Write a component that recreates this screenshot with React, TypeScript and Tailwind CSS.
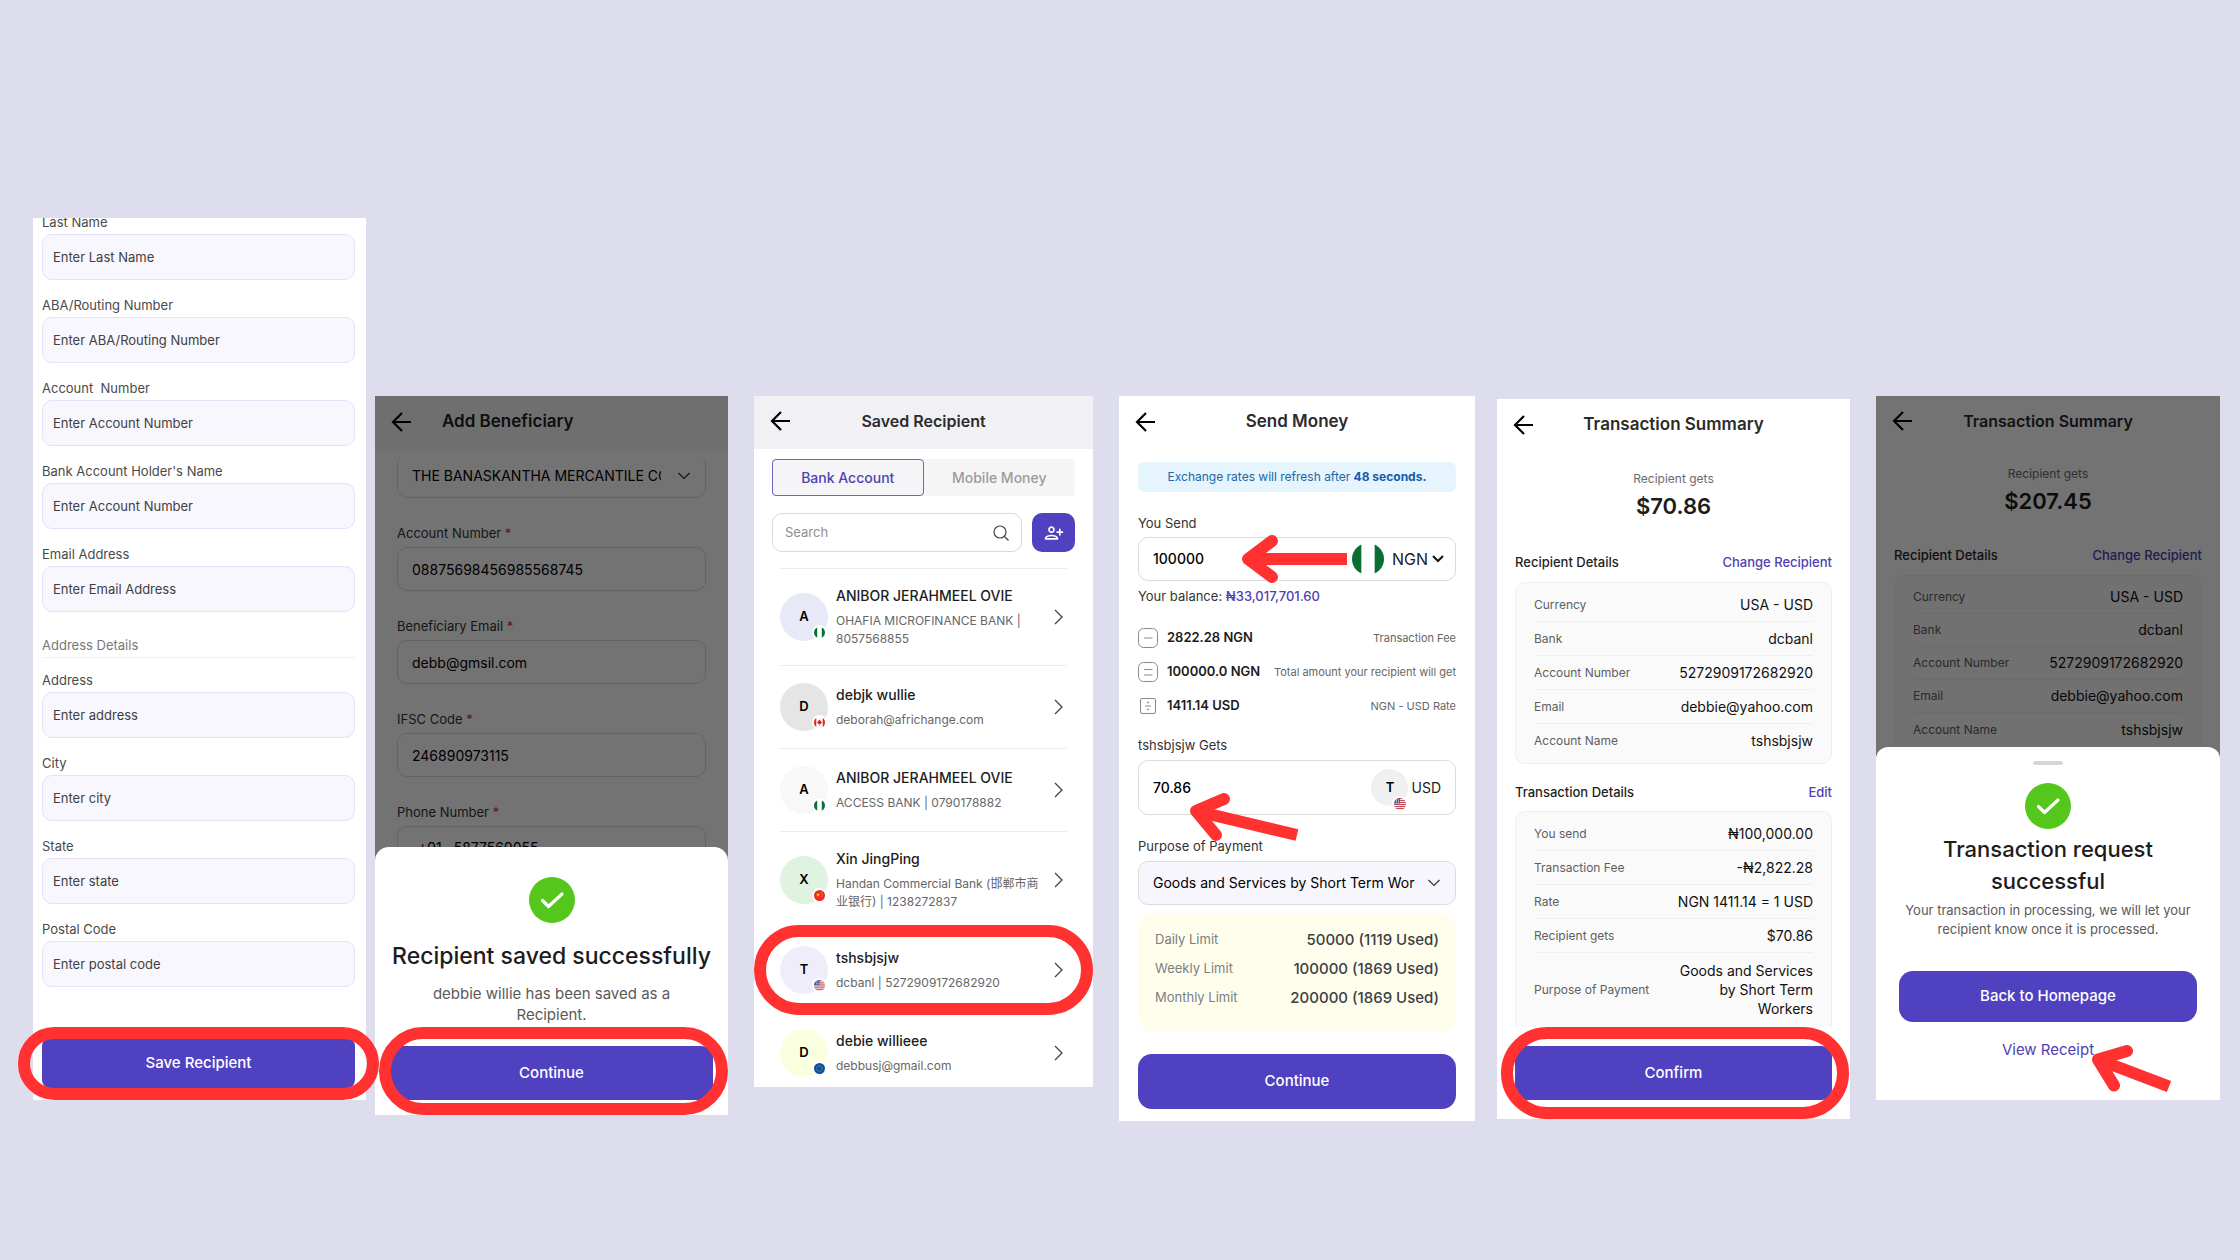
import React, { useId } from "react";

// Address form on the first screen
const accountFields = [
  { label: "Last Name", placeholder: "Enter Last Name" },
  { label: "ABA/Routing Number", placeholder: "Enter ABA/Routing Number" },
  { label: "Account  Number", placeholder: "Enter Account Number" },
  { label: "Bank Account Holder's Name", placeholder: "Enter Account Number" },
  { label: "Email Address", placeholder: "Enter Email Address" },
];

const addressFields = [
  { label: "Address", placeholder: "Enter address" },
  { label: "City", placeholder: "Enter city" },
  { label: "State", placeholder: "Enter state" },
  { label: "Postal Code", placeholder: "Enter postal code" },
];

const beneficiaryFields = [
  { label: "Account Number", value: "08875698456985568745" },
  { label: "Beneficiary Email", value: "debb@gmsil.com" },
  { label: "IFSC Code", value: "246890973115" },
];

type Country = "ng" | "ca" | "cn" | "us" | "eu";

const recipients: {
  name: string;
  detail: string;
  country: Country;
  color: string;
  marked?: boolean;
}[] = [
  {
    name: "ANIBOR JERAHMEEL OVIE",
    detail: "OHAFIA MICROFINANCE BANK | 8057568855",
    country: "ng",
    color: "bg-[#e8e9f6]",
  },
  {
    name: "debjk wullie",
    detail: "deborah@africhange.com",
    country: "ca",
    color: "bg-[#e5e5e5]",
  },
  {
    name: "ANIBOR JERAHMEEL OVIE",
    detail: "ACCESS BANK | 0790178882",
    country: "ng",
    color: "bg-[#f8f8f8]",
  },
  {
    name: "Xin JingPing",
    detail: "Handan Commercial Bank (邯郸市商业银行) | 1238272837",
    country: "cn",
    color: "bg-[#e0f2e0]",
  },
  {
    name: "tshsbjsjw",
    detail: "dcbanl | 5272909172682920",
    country: "us",
    color: "bg-[#efedfa]",
    marked: true,
  },
  {
    name: "debie willieee",
    detail: "debbusj@gmail.com",
    country: "eu",
    color: "bg-[#faffe0]",
  },
];

const rates = [
  { sign: "minus", amount: "2822.28 NGN", note: "Transaction Fee" },
  {
    sign: "equals",
    amount: "100000.0 NGN",
    note: "Total amount your recipient will get",
  },
  { sign: "divide", amount: "1411.14 USD", note: "NGN - USD Rate" },
];

const limits = [
  { label: "Daily Limit", value: "50000 (1119 Used)" },
  { label: "Weekly Limit", value: "100000 (1869 Used)" },
  { label: "Monthly Limit", value: "200000 (1869 Used)" },
];

const recipientDetails = [
  ["Currency", "USA - USD"],
  ["Bank", "dcbanl"],
  ["Account Number", "5272909172682920"],
  ["Email", "debbie@yahoo.com"],
  ["Account Name", "tshsbjsjw"],
];

const transactionDetails = [
  ["You send", "₦100,000.00"],
  ["Transaction Fee", "-₦2,822.28"],
  ["Rate", "NGN 1411.14 = 1 USD"],
  ["Recipient gets", "$70.86"],
];

const BackArrow = () => (
  <svg width="20" height="20" viewBox="0 0 20 20" fill="none" stroke="#000" strokeWidth="2.2">
    <path d="M20 10H2M11 1L2 10l9 9" />
  </svg>
);

const ThinChevron = ({ className }: { className: string }) => (
  <svg
    className={className}
    width="12"
    height="8"
    viewBox="0 0 12 8"
    fill="none"
    stroke="#333"
    strokeWidth="1.2"
  >
    <path d="M.5 1L6 6.500 11.500 1" />
  </svg>
);

const Flag = ({ country, className }: { country: Country; className: string }) => {
  const id = useId();
  return (
    <svg className={className} viewBox="0 0 24 24">
      <clipPath id={id}>
        <circle cx="12" cy="12" r="12" />
      </clipPath>
      <g clipPath={`url(#${id})`}>
        {country === "ng" && (
          <>
            <path fill="#fff" d="M0 0h24v24H0z" />
            <path fill="#0b6e33" d="M0 0h7v24H0zM17 0h7v24h-7z" />
          </>
        )}
        {country === "ca" && (
          <>
            <path fill="#fff" d="M0 0h24v24H0z" />
            <path fill="#d52b1e" d="M0 0h5v24H0zM19 0h5v24h-5z" />
            <path
              fill="#d52b1e"
              d="M12 5l1.500 3 2-.8-.5 3.300 3 .5-3 3.500.3 1.500-2.800-.5V19h-1v-3.500l-2.800.5.3-1.500-3-3.500 3-.5-.5-3.300 2 .8z"
            />
          </>
        )}
        {country === "cn" && (
          <>
            <path fill="#ee2b24" d="M0 0h24v24H0z" />
            <path
              fill="#ffca28"
              d="M9 6l1.200 3.300h3.500l-2.800 2.100 1 3.400L9 12.800l-2.900 2 1-3.400-2.800-2.100h3.500zM15 5h2v2h-2zM17 8.500h2v2h-2zM16 12.500h2v2h-2z"
            />
          </>
        )}
        {country === "us" && (
          <>
            <path fill="#f2e4e6" d="M0 0h24v24H0z" />
            <path
              stroke="#c4515c"
              strokeWidth="2"
              d="M0 1h24M0 5h24M0 9h24M0 13h24M0 17h24M0 21h24"
            />
            <path fill="#3a5a9e" d="M0 0h12v11H0z" />
            <path fill="#fff" d="M4 3h2v2H4zM8 3h2v2H8zM4 7h2v2H4zM8 7h2v2H8z" />
          </>
        )}
        {country === "eu" && (
          <>
            <path fill="#0b4ea2" d="M0 0h24v24H0z" />
            <circle
              cx="12"
              cy="12"
              r="6"
              fill="none"
              stroke="#e8d23a"
              strokeWidth="1.800"
              strokeDasharray="1.800 2.900"
            />
          </>
        )}
      </g>
    </svg>
  );
};

const SignIcon = ({ sign }: { sign: string }) => (
  <svg width="20" height="20" viewBox="0 0 20 20" fill="none" stroke="#8a8a8a" className="shrink-0">
    {sign === "divide" ? (
      <>
        <rect x="2.500" y="2.500" width="15" height="15" rx="1.500" />
        <path d="M7 10h6" />
        <circle cx="10" cy="6.500" r=".6" fill="#8a8a8a" />
        <circle cx="10" cy="13.500" r=".6" fill="#8a8a8a" />
      </>
    ) : (
      <>
        <rect x=".5" y=".5" width="19" height="19" rx="5" />
        {sign === "minus" ? <path d="M6 10h8.500" /> : <path d="M6 7.500h8.500M6 13h8.500" />}
      </>
    )}
  </svg>
);

const SuccessIcon = () => (
  <svg className="mx-auto size-[46px]" viewBox="0 0 46 46" fill="none">
    <circle cx="23" cy="23" r="23" fill="#55c61b" />
    <path
      d="M13.500 23.500l6 6L33 17"
      stroke="#fff"
      strokeWidth="3.200"
      strokeLinecap="round"
      strokeLinejoin="round"
    />
  </svg>
);

// Red outline that points at the next tap
const Ring = ({ className }: { className: string }) => (
  <span
    className={`pointer-events-none absolute z-10 rounded-full border-[12px] border-[#ff3131] ${className}`}
  />
);

const Pointer = ({
  className,
  width,
  height,
  head,
  shaft,
}: {
  className: string;
  width: number;
  height: number;
  head: string;
  shaft: string;
}) => (
  <svg
    className={`pointer-events-none absolute z-10 max-w-none ${className}`}
    width={width}
    height={height}
    viewBox={`0 0 ${width} ${height}`}
    fill="none"
    stroke="#ff3131"
    strokeWidth="12"
  >
    <path d={shaft} />
    <path d={head} strokeLinecap="round" strokeLinejoin="round" />
  </svg>
);

const ScreenHeader = ({ title, className }: { title: string; className: string }) => (
  <header
    className={`grid grid-cols-[20px_1fr_20px] items-center px-4 font-semibold text-[#2b2b2b] ${className}`}
  >
    <button aria-label="Back">
      <BackArrow />
    </button>
    <h2 className="text-center">{title}</h2>
  </header>
);

const PrimaryButton = ({ children, className }: { children: string; className: string }) => (
  <button className={`block w-full bg-[#4f41c0] text-[15px] font-medium text-white ${className}`}>
    {children}
  </button>
);

const FormField = ({ label, placeholder }: { label: string; placeholder: string }) => {
  const id = useId();
  return (
    <div>
      <label
        htmlFor={id}
        className="block text-[13px] leading-5 whitespace-pre text-[#4a4a4a]"
      >
        {label}
      </label>
      <input
        id={id}
        placeholder={placeholder}
        className="mt-0.5 block h-[46px] w-full rounded-[10px] border border-[#e4e1f8] bg-[#f8f7fd] px-2.5 text-[13px] placeholder:text-[#404040]"
      />
    </div>
  );
};

const DetailRows = ({ rows, rowClass }: { rows: string[][]; rowClass: string }) => (
  <>
    {rows.map(([label, value]) => (
      <div
        key={label}
        className={`flex items-center justify-between border-b border-[#efefef] ${rowClass}`}
      >
        <dt className="text-xs text-[#5f5f5f]">{label}</dt>
        <dd className="text-sm text-[#111]">{value}</dd>
      </div>
    ))}
  </>
);

const SectionHead = ({
  title,
  link,
  className,
}: {
  title: string;
  link: string;
  className: string;
}) => (
  <div className={`flex justify-between text-[13px] leading-5 font-medium ${className}`}>
    <h3 className="text-[#1f1f1f]">{title}</h3>
    <a href="#" className="text-[#4f41b0]">
      {link}
    </a>
  </div>
);

const RecipientForm = () => (
  <section className="min-w-0 flex-[333_1_0%] bg-white">
    <div className="pr-[11px] pb-3 pl-[9px]">
      <div className="overflow-hidden">
        <div className="-mt-1.5 flex flex-col gap-[15px]">
          {accountFields.map((field) => (
            <FormField key={field.label} {...field} />
          ))}
        </div>
      </div>
      <h3 className="mt-[23px] border-b border-[#f0f0f0] pb-0.5 text-[13px] leading-5 text-[#777]">
        Address Details
      </h3>
      <div className="mt-3 flex flex-col gap-[15px]">
        {addressFields.map((field) => (
          <FormField key={field.label} {...field} />
        ))}
      </div>
      <div className="relative mt-[51px]">
        <PrimaryButton className="h-[50px] rounded-lg">Save Recipient</PrimaryButton>
        <Ring className="-inset-x-6 -top-[11px] -bottom-3" />
      </div>
    </div>
  </section>
);

const fieldBox =
  "h-11 w-full rounded-[10px] border border-[#dcdcdc] px-3.5 text-sm text-black";

const AddBeneficiary = () => (
  <section className="relative mt-[178px] ml-[9px] min-w-0 flex-[353_1_0%] bg-white">
    <header className="flex h-[55px] items-center gap-[31px] bg-[#f6f6f8] px-4 pb-1">
      <button aria-label="Back">
        <BackArrow />
      </button>
      <h2 className="text-[17px] font-semibold text-[#1f1f1f]">Add Beneficiary</h2>
    </header>
    <div className="mt-[7px] overflow-hidden px-[22px]">
      <div className="relative -mt-1">
        <select aria-label="Bank" className={`${fieldBox} block appearance-none pr-11`}>
          <option>THE BANASKANTHA MERCANTILE COOPERATIVE BANK</option>
        </select>
        <ThinChevron className="absolute top-[18px] right-4" />
      </div>
      {beneficiaryFields.map(({ label, value }) => (
        <label key={label} className="mt-[25px] block text-[13px] leading-5 text-[#333]">
          {label} <span className="text-[#e5262b]">*</span>
          <input defaultValue={value} className={`${fieldBox} mt-1 block`} />
        </label>
      ))}
      <label className="mt-[25px] block text-[13px] leading-5 text-[#333]">
        Phone Number <span className="text-[#e5262b]">*</span>
        <span className={`${fieldBox} mt-1 flex items-center gap-3 pl-5`}>
          +91
          <input defaultValue="5877569055" className="min-w-0 flex-1" />
        </span>
      </label>
    </div>
    <div className="absolute inset-0 bg-black/55" />
    <div className="relative -mt-[23px] rounded-t-[14px] bg-white px-[15px] pt-[30px] pb-[15px] text-center">
      <SuccessIcon />
      <h3 className="-mx-2 mt-[18px] text-[23px] leading-[30px] font-medium text-[#1c1c1c]">
        Recipient saved successfully
      </h3>
      <p className="mt-3 px-8 text-[15px] leading-[21px] text-[#5a5a5a]">
        debbie willie has been saved as a Recipient.
      </p>
      <div className="relative mt-[21px]">
        <PrimaryButton className="h-[54px] rounded-xl">Continue</PrimaryButton>
        <Ring className="-top-[19px] -right-[15px] -bottom-[15px] -left-[11px]" />
      </div>
    </div>
  </section>
);

const SavedRecipient = () => (
  <section className="mt-[178px] ml-[26px] min-w-0 flex-[339_1_0%] overflow-hidden bg-white">
    <ScreenHeader title="Saved Recipient" className="h-[53px] bg-[#f1f0f5] pb-1 text-base" />
    <div className="px-[18px]">
      <div className="mt-2.5 grid h-[37px] grid-cols-2 rounded bg-[#f5f5f5] text-sm font-medium">
        <button className="rounded border border-[#6f63bd] bg-[#f5f5f8] text-[#4f41b0]">
          Bank Account
        </button>
        <button className="text-[#9b9b9b]">Mobile Money</button>
      </div>
      <div className="mt-[17px] flex h-[39px] gap-2.5">
        <label className="flex min-w-0 flex-1 items-center rounded-[10px] border border-[#d9d9d9] px-3">
          <input
            aria-label="Search"
            placeholder="Search"
            className="min-w-0 flex-1 text-[13px] placeholder:text-[#8f8f8f]"
          />
          <svg width="16" height="16" viewBox="0 0 16 16" fill="none" stroke="#444" strokeWidth="1.200">
            <circle cx="7" cy="7" r="6" />
            <path d="M11.500 11.500L15.500 15.500" />
          </svg>
        </label>
        <button
          aria-label="Add recipient"
          className="flex w-[43px] items-center justify-center rounded-[10px] bg-[#4f41c0]"
        >
          <svg width="20" height="20" viewBox="0 0 24 24" fill="#fff">
            <path d="M13 8c0-2.210-1.790-4-4-4S5 5.790 5 8s1.790 4 4 4 4-1.790 4-4zm-2 0c0 1.100-.9 2-2 2s-2-.9-2-2 .9-2 2-2 2 .9 2 2zM1 18v2h16v-2c0-2.660-5.330-4-8-4s-8 1.340-8 4zm2 0c.2-.71 3.300-2 6-2 2.690 0 5.780 1.280 6 2H3zm17-3v-3h3v-2h-3V7h-2v3h-3v2h3v3h2z" />
          </svg>
        </button>
      </div>
      <ul className="mx-2 mt-4">
        {recipients.map(({ name, detail, country, color, marked }) => (
          <li
            key={detail}
            className="relative flex items-center border-t border-[#ececec] py-[17px] last:-mb-[7px]"
          >
            <span
              className={`relative flex size-12 shrink-0 items-center justify-center rounded-full text-[13px] font-semibold text-black ${color}`}
            >
              {name[0].toUpperCase()}
              <span className="absolute right-px bottom-px rounded-full bg-white p-0.5">
                <Flag country={country} className="size-[11px]" />
              </span>
            </span>
            <div className="ml-2 w-[212px]">
              <p className="text-sm leading-5 font-medium text-[#1c1c1c]">{name}</p>
              <p className="mt-1.5 text-xs leading-[18px] text-[#666]">{detail}</p>
            </div>
            <svg
              className="ml-auto mr-1 shrink-0"
              width="9"
              height="16"
              viewBox="0 0 9 16"
              fill="none"
              stroke="#444"
              strokeWidth="1.300"
            >
              <path d="M1 1l7 7-7 7" />
            </svg>
            {marked && <Ring className="-inset-x-[26px] -inset-y-1" />}
          </li>
        ))}
      </ul>
    </div>
  </section>
);

const SendMoney = () => (
  <section className="mt-[178px] ml-[26px] min-w-0 flex-[356_1_0%] bg-white pb-3">
    <ScreenHeader title="Send Money" className="h-[51px] text-[17px]" />
    <div className="px-[19px]">
      <p className="mt-[15px] rounded-md bg-[#e5f4fd] text-center text-xs leading-[30px] text-[#2068a5]">
        Exchange rates will refresh after <b className="text-[#155bb0]">48 seconds.</b>
      </p>
      <label htmlFor="send" className="mt-[21px] block text-[13px] leading-5 text-[#333]">
        You Send
      </label>
      <div className="relative mt-1 flex h-11 items-center rounded-[10px] border border-[#dcdcdc] pr-[11px] pl-3.5">
        <input
          id="send"
          defaultValue="100000"
          className="min-w-0 flex-1 text-sm font-medium text-black"
        />
        <Flag country="ng" className="size-8" />
        <div className="relative ml-2">
          <select aria-label="Currency" className="w-[52px] appearance-none text-base text-[#222]">
            <option>NGN</option>
          </select>
          <svg
            className="pointer-events-none absolute top-2 right-0"
            width="12"
            height="8"
            viewBox="0 0 12 8"
            fill="none"
            stroke="#111"
            strokeWidth="2"
          >
            <path d="M1 1l5 5 5-5" />
          </svg>
        </div>
        <Pointer
          className="-top-1 left-[101px]"
          width={109}
          height={50}
          head="M32 7L8 25l24 18"
          shaft="M8 25h99"
        />
      </div>
      <p className="mt-[5px] text-[13px] leading-5 text-[#333]">
        Your balance: <span className="font-medium text-[#4f41b0]">₦33,017,701.60</span>
      </p>
      <ul className="mt-[22px] flex flex-col gap-3.5">
        {rates.map(({ sign, amount, note }) => (
          <li key={sign} className="flex h-5 items-center whitespace-nowrap">
            <SignIcon sign={sign} />
            <span className="ml-[9px] text-[13px] font-semibold text-[#1c1c1c]">{amount}</span>
            <span className="ml-auto text-[11px] text-[#666]">{note}</span>
          </li>
        ))}
      </ul>
      <label htmlFor="gets" className="mt-[19px] block text-[13px] leading-5 text-[#333]">
        tshsbjsjw Gets
      </label>
      <div className="relative mt-[5px] flex h-[55px] items-center rounded-[10px] border border-[#dcdcdc] px-3.5">
        <input
          id="gets"
          defaultValue="70.86"
          className="min-w-0 flex-1 text-sm font-medium text-black"
        />
        <span className="relative mr-[3px] flex size-[37px] items-center justify-center rounded-full bg-[#f0f0f0] text-[13px] font-semibold">
          T
          <span className="absolute right-0 -bottom-1.5 rounded-full bg-white p-0.5">
            <Flag country="us" className="size-3" />
          </span>
        </span>
        <span className="text-sm text-[#222]">USD</span>
        <Pointer
          className="top-[29px] left-[47px]"
          width={115}
          height={54}
          head="M38 9L10 21l20 24"
          shaft="M10 21l101 24"
        />
      </div>
      <label htmlFor="purpose" className="mt-[21px] block text-[13px] leading-5 text-[#333]">
        Purpose of Payment
      </label>
      <div className="relative mt-[5px]">
        <select
          id="purpose"
          className={`${fieldBox} block appearance-none bg-[#f7f6fc] pr-9`}
        >
          <option>Goods and Services by Short Term Wor</option>
        </select>
        <ThinChevron className="absolute top-[18px] right-4" />
      </div>
      <dl className="mt-2 flex flex-col gap-[9px] rounded-2xl bg-[#fffeec] px-[17px] pt-[17px] pb-6">
        {limits.map(({ label, value }) => (
          <div key={label} className="flex h-5 items-center justify-between">
            <dt className="text-[13px] text-[#7a7f82]">{label}</dt>
            <dd className="text-[15px] font-medium text-[#3a4046]">{value}</dd>
          </div>
        ))}
      </dl>
      <PrimaryButton className="mt-[22px] h-[55px] rounded-[14px]">Continue</PrimaryButton>
    </div>
  </section>
);

const ConfirmTransaction = () => (
  <section className="mt-[181px] ml-[22px] min-w-0 flex-[353_1_0%] bg-white pb-[19px]">
    <ScreenHeader title="Transaction Summary" className="h-[52px] text-[17px]" />
    <div className="px-[18px]">
      <p className="mt-[18px] text-center text-xs leading-5 text-[#6b6b6b]">Recipient gets</p>
      <p className="mt-0.5 text-center text-[22px] leading-[30px] font-semibold text-[#1c1c1c]">
        $70.86
      </p>
      <SectionHead title="Recipient Details" link="Change Recipient" className="mt-[31px]" />
      <dl className="mt-2.5 rounded-[10px] border border-[#efefef] bg-[#fafafa] px-[18px] py-[5px]">
        <DetailRows rows={recipientDetails} rowClass="h-[34px] last:border-b-0" />
      </dl>
      <SectionHead title="Transaction Details" link="Edit" className="mt-[18px]" />
      <dl className="mt-[9px] rounded-t-[10px] border border-b-0 border-[#efefef] bg-[#fafafa] px-[18px] pt-[5px] pb-[9px]">
        <DetailRows rows={transactionDetails} rowClass="h-[34px]" />
        <div className="flex items-center justify-between pt-2">
          <dt className="text-xs text-[#5f5f5f]">Purpose of Payment</dt>
          <dd className="w-[140px] text-right text-sm leading-[19px] text-[#111]">
            Goods and Services by Short Term Workers
          </dd>
        </div>
      </dl>
      <div className="relative mt-[19px]">
        <PrimaryButton className="h-[54px] rounded-[10px]">Confirm</PrimaryButton>
        <Ring className="-inset-y-[19px] -right-[17px] -left-[14px]" />
      </div>
    </div>
  </section>
);

const RequestSuccessful = () => (
  <section className="relative mt-[178px] ml-[26px] min-w-0 flex-[344_1_0%] bg-white">
    <ScreenHeader title="Transaction Summary" className="h-[50px] text-base" />
    <div className="px-[18px]">
      <p className="mt-[18px] text-center text-xs leading-5 text-[#6b6b6b]">Recipient gets</p>
      <p className="mt-0.5 text-center text-[22px] leading-[30px] font-semibold text-[#1c1c1c]">
        $207.45
      </p>
      <SectionHead title="Recipient Details" link="Change Recipient" className="mt-[29px]" />
      <dl className="mt-2.5 rounded-t-[10px] border border-b-0 border-[#efefef] bg-[#fafafa] px-[18px] pt-[5px] pb-[13px]">
        <DetailRows rows={recipientDetails} rowClass="h-[33px] last:border-b-0" />
      </dl>
    </div>
    <div className="absolute inset-0 bg-black/55" />
    <div className="relative -mt-3 rounded-t-[12px] bg-white px-[23px] pt-[14px] pb-10 text-center">
      <div className="mx-auto mb-[18px] h-1 w-[30px] rounded-full bg-[#d6d6d6]" />
      <SuccessIcon />
      <h3 className="mt-1 px-6 text-[22px] leading-8 font-medium text-[#1c1c1c]">
        Transaction request successful
      </h3>
      <p className="mt-1 text-[13px] leading-[19px] text-[#5a5a5a]">
        Your transaction in processing, we will let your recipient know once it is processed.
      </p>
      <PrimaryButton className="mt-8 h-[51px] rounded-[14px]">Back to Homepage</PrimaryButton>
      <div className="mt-[18px] flex justify-center">
        <a href="#" className="relative text-[15px] leading-5 text-[#4f41b0]">
          View Receipt
          <Pointer
            className="top-1 left-full -ml-1.5"
            width={85}
            height={50}
            head="M39 7L10 15.500l16 26"
            shaft="M10 15.500l71 27"
          />
        </a>
      </div>
    </div>
  </section>
);

const App = () => {
  return (
    <main className="flex min-h-screen items-start bg-[#dedded] pt-[218px] pr-5 pb-[138px] pl-[33px] font-['Inter','Noto_Sans_CJK_SC',sans-serif]">
      <RecipientForm />
      <AddBeneficiary />
      <SavedRecipient />
      <SendMoney />
      <ConfirmTransaction />
      <RequestSuccessful />
    </main>
  );
};

export default App;
